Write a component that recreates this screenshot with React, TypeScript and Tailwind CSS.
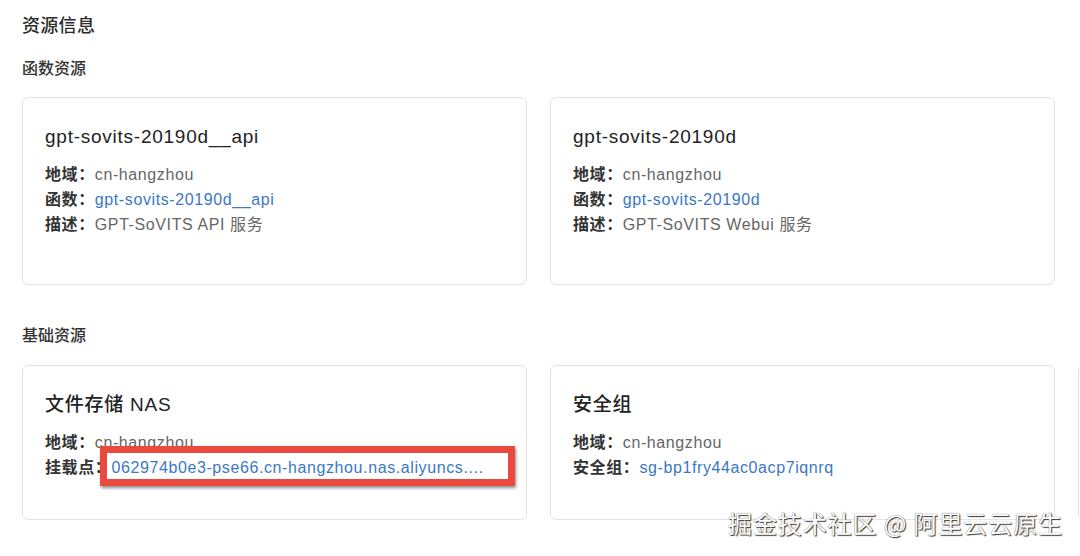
import type { ReactNode } from 'react';

type Field = {
  label: string;
  value: string;
  link?: boolean;
};

type Resource = {
  title: string;
  fields: Field[];
};

const functionResources: Resource[] = [
  {
    title: 'gpt-sovits-20190d__api',
    fields: [
      { label: '地域', value: 'cn-hangzhou' },
      { label: '函数', value: 'gpt-sovits-20190d__api', link: true },
      { label: '描述', value: 'GPT-SoVITS API 服务' },
    ],
  },
  {
    title: 'gpt-sovits-20190d',
    fields: [
      { label: '地域', value: 'cn-hangzhou' },
      { label: '函数', value: 'gpt-sovits-20190d', link: true },
      { label: '描述', value: 'GPT-SoVITS Webui 服务' },
    ],
  },
];

const baseResources: Resource[] = [
  {
    title: '文件存储 NAS',
    fields: [
      { label: '地域', value: 'cn-hangzhou' },
      { label: '挂载点', value: '062974b0e3-pse66.cn-hangzhou.nas.aliyuncs....', link: true },
    ],
  },
  {
    title: '安全组',
    fields: [
      { label: '地域', value: 'cn-hangzhou' },
      { label: '安全组', value: 'sg-bp1fry44ac0acp7iqnrq', link: true },
    ],
  },
];

function ResourceCard({ res, height, children }: { res?: Resource; height: string; children?: ReactNode }) {
  return (
    <div className={`relative w-[505px] shrink-0 rounded-[6px] border border-[#e4e4e4] bg-white px-[22px] pt-[26px] ${height}`}>
      {res && (
        <>
          <h3 className="text-[19px] leading-[26px] tracking-[0.75px] text-[#222] font-medium">{res.title}</h3>
          <div className="mt-[12px] text-[16px] leading-[25px] tracking-[0.6px]">
            {res.fields.map((f) => (
              <div key={f.label} className="flex whitespace-nowrap">
                <span className="font-semibold text-[#333]">{f.label}：</span>
                <span className={f.link ? 'text-[#3b78c4]' : 'text-[#666]'}>{f.value}</span>
              </div>
            ))}
          </div>
        </>
      )}
      {children}
    </div>
  );
}

export default function App() {
  return (
    <div className="relative h-[556px] w-[1080px] overflow-hidden bg-white pl-[22px] pt-[13px] font-['Liberation_Sans','Noto_Sans_CJK_SC',sans-serif]">
      <h2 className="text-[18px] leading-[26px] tracking-[0.3px] font-medium text-[#2b2b2b]">资源信息</h2>

      <h4 className="mt-[18px] text-[16px] leading-[24px] font-medium text-[#333]">函数资源</h4>
      <div className="mt-[16px] flex gap-[23px]">
        {functionResources.map((r) => (
          <ResourceCard key={r.title} res={r} height="h-[188px]" />
        ))}
      </div>

      <h4 className="mt-[39px] text-[16px] leading-[24px] font-medium text-[#333]">基础资源</h4>
      <div className="mt-[17px] flex gap-[23px]">
        <ResourceCard res={baseResources[0]} height="h-[155px]">
          {/* highlight frame around the mount point */}
          <div className="absolute left-[77px] top-[80px] h-[40px] w-[415px] border-[7px] border-[#ea4a3e] shadow-[1px_2px_3px_rgba(0,0,0,0.45)]" />
        </ResourceCard>
        <ResourceCard res={baseResources[1]} height="h-[155px]" />
        <ResourceCard height="h-[155px]" />
      </div>

      <div className="absolute left-[728px] top-[507px] whitespace-nowrap text-[24px] leading-[32px] tracking-[0.9px] text-white font-['Noto_Sans_CJK_SC',sans-serif] [text-shadow:0_0_1px_#444,1px_1px_1px_#333]">
        掘金技术社区 @ 阿里云云原生
      </div>
    </div>
  );
}
